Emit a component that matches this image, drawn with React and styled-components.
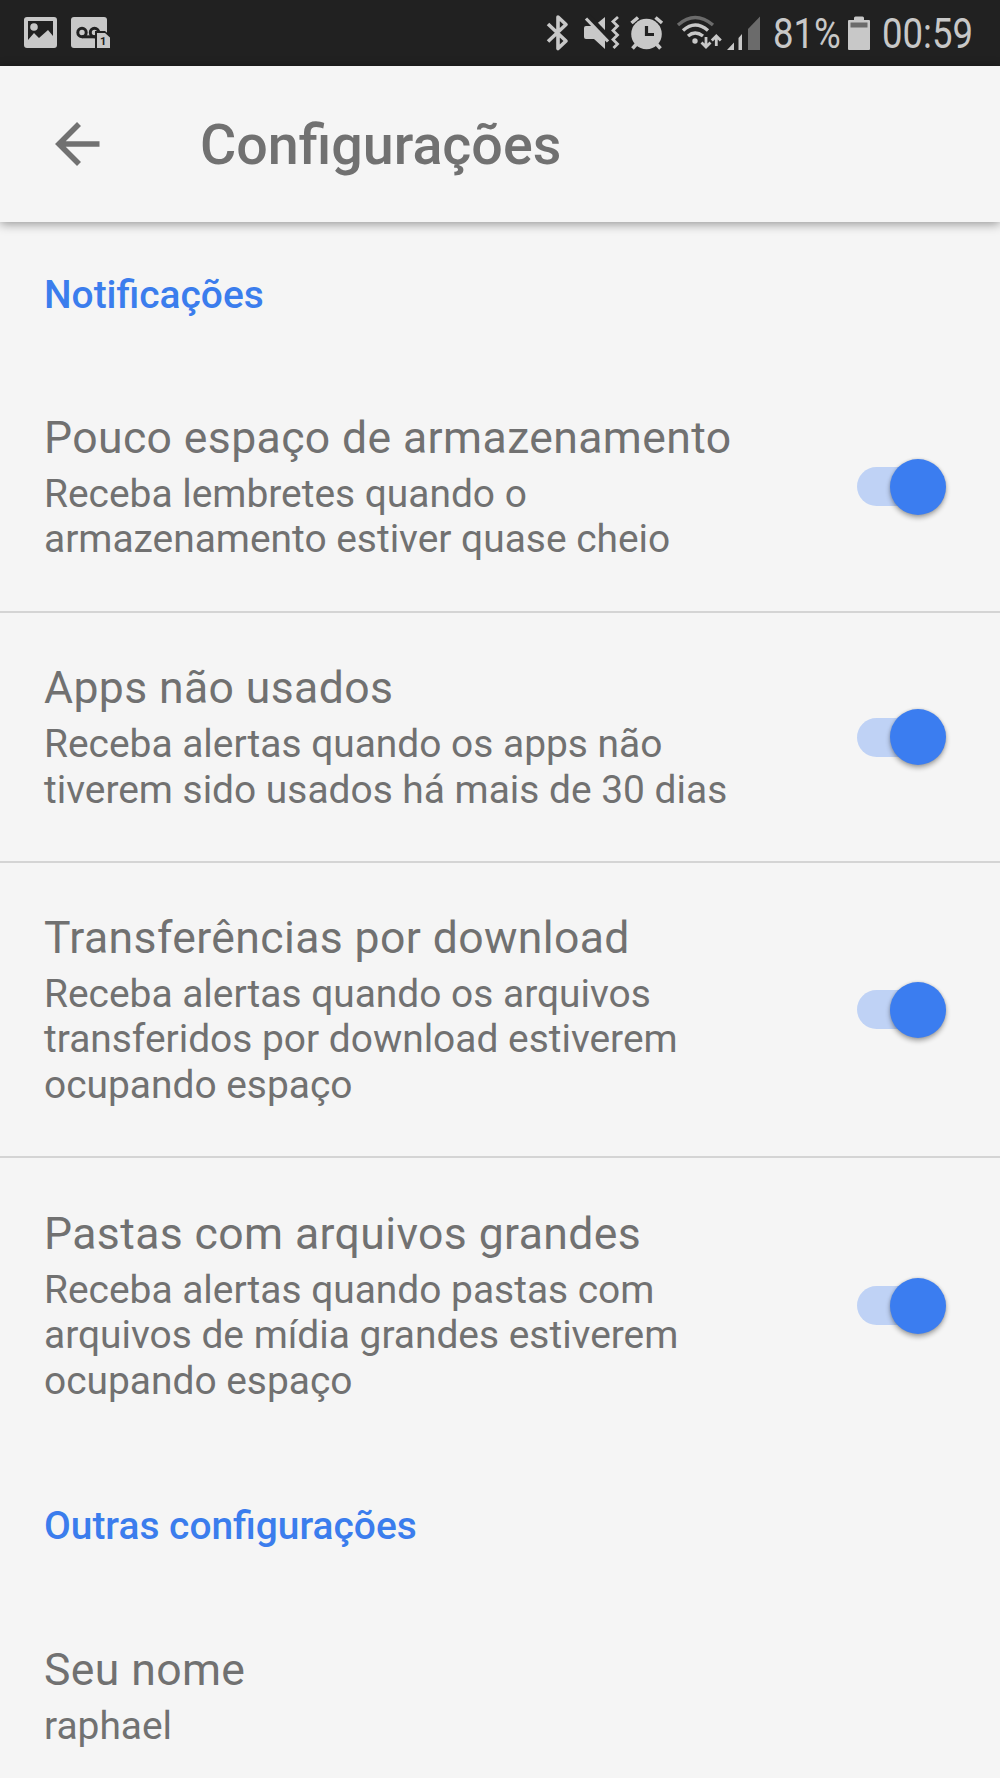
import React, { useState } from 'react'
import styled, { createGlobalStyle } from 'styled-components'

const GlobalStyle = createGlobalStyle`
  body {
    margin: 0;
    background: #f5f5f5;
    font-family: Roboto, sans-serif;
    color: #717171;
  }
`

const Screen = styled.div`
  width: 1000px;
  height: 1778px;
  overflow: hidden;
  background: #f5f5f5;
`

const StatusBar = styled.header`
  display: flex;
  align-items: center;
  justify-content: space-between;
  box-sizing: border-box;
  height: 66px;
  padding: 0 27px 0 23px;
  background: #212121;
  color: #c8c8c8;
`

const StatusGroup = styled.div`
  display: flex;
  align-items: center;
  height: 66px;
`

const StatusIcon = styled.svg`
  display: block;
  flex: none;
  width: ${({ $width }) => $width}px;
  height: 66px;
  margin-left: ${({ $gap }) => $gap || 0}px;
`

const StatusText = styled.span`
  display: block;
  width: ${({ $width }) => $width}px;
  margin-left: ${({ $gap }) => $gap}px;
  font-size: 42px;
  line-height: 66px;
  white-space: nowrap;
  transform: translateY(1px) scaleX(0.87);
  transform-origin: left center;
`

const Toolbar = styled.div`
  position: relative;
  display: flex;
  align-items: center;
  box-sizing: border-box;
  height: 156px;
  padding-left: 55px;
  background: #f5f5f5;
  box-shadow: 0 2px 10px rgba(0, 0, 0, 0.4);
`

const BackButton = styled.button`
  display: flex;
  padding: 0;
  border: 0;
  background: none;
  color: inherit;
`

const Title = styled.h1`
  margin: 2px 0 0 100px;
  font-size: 55.6px;
  font-weight: 500;
  line-height: 66px;
`

const SectionTitle = styled.h2`
  box-sizing: border-box;
  height: ${({ $height }) => $height || 140}px;
  margin: 0;
  padding: 50px 44px 0;
  color: #3b7ded;
  font-size: 38.9px;
  font-weight: 500;
  line-height: 46px;
`

const Item = styled.div`
  display: flex;
  align-items: center;
  justify-content: space-between;
  box-sizing: border-box;
  height: ${({ $height }) => $height}px;
  padding: 0 54px 0 44px;
  border-bottom: ${({ $last }) => ($last ? '0' : '2px solid #d4d4d4')};
`

const ItemTitle = styled.div`
  font-size: 44.5px;
  line-height: 52px;
  letter-spacing: 0.4px;
`

const ItemText = styled.div`
  margin-top: 7px;
  font-size: 38.9px;
  line-height: 45.4px;
  white-space: pre-line;
`

const Switch = styled.button`
  display: flex;
  align-items: center;
  justify-content: ${({ $on }) => ($on ? 'flex-end' : 'flex-start')};
  width: 89px;
  height: 39px;
  padding: 0;
  border: 0;
  background: linear-gradient(#bfd2f5, #bfd2f5) 0 0 / 75px 39px no-repeat;
  border-radius: 20px 0 0 20px;
`

const Thumb = styled.span`
  flex: none;
  width: 56px;
  height: 56px;
  border-radius: 50%;
  background: #3b7df0;
  box-shadow: 0 3px 5px rgba(0, 0, 0, 0.32), 0 0 3px rgba(0, 0, 0, 0.14);
`

const notifications = [
  {
    title: 'Pouco espaço de armazenamento',
    text: 'Receba lembretes quando o\narmazenamento estiver quase cheio',
    height: 251
  },
  {
    title: 'Apps não usados',
    text: 'Receba alertas quando os apps não\ntiverem sido usados há mais de 30 dias',
    height: 250
  },
  {
    title: 'Transferências por download',
    text: 'Receba alertas quando os arquivos\ntransferidos por download estiverem\nocupando espaço',
    height: 295
  },
  {
    title: 'Pastas com arquivos grandes',
    text: 'Receba alertas quando pastas com\narquivos de mídia grandes estiverem\nocupando espaço',
    height: 295
  }
]

const PictureIcon = () => (
  <StatusIcon $width={35} viewBox="23 0 35 66" fill="#c8c8c8">
    <path
      fillRule="evenodd"
      d="M27 17h27q3 0 3 3v25q0 3-3 3H27q-3 0-3-3V20q0-3 3-3zM28 21v19l6-7 5 5 9-8 5 6V21z"
    />
    <circle cx="34" cy="27" r="3.8" />
  </StatusIcon>
)

const VoicemailIcon = () => (
  <StatusIcon $width={40} $gap={12} viewBox="70 0 40 66">
    <rect x="71" y="17" width="36" height="31" rx="3" fill="#c8c8c8" />
    <g fill="none" stroke="#212121" strokeWidth="3">
      <circle cx="82" cy="32.5" r="4.2" />
      <circle cx="94.5" cy="32.5" r="4.2" />
      <path d="M82 36.8h13" />
    </g>
    <path d="M95 49V31h10l6 5v13z" fill="#212121" />
    <path d="M97 48V33h8l5 4.500V48z" fill="#c8c8c8" />
    <text x="100" y="45" fill="#212121" fontSize="11" fontWeight="700">
      1
    </text>
  </StatusIcon>
)

const BluetoothIcon = () => (
  <StatusIcon $width={24} viewBox="546 0 24 66">
    <path
      d="M548 24l18 17-8 7.500V17l8 7.500-18 17"
      fill="none"
      stroke="#c8c8c8"
      strokeWidth="3.600"
      strokeLinejoin="round"
    />
  </StatusIcon>
)

const MutedIcon = () => (
  <StatusIcon $width={38} $gap={13} viewBox="583 0 38 66">
    <path d="M586 26h8l11-9v32l-11-10h-8q-2 0-2-2v-9q0-2 2-2z" fill="#c8c8c8" />
    <path d="M588 16l22 23" stroke="#212121" strokeWidth="5" />
    <path d="M586 18.500l22 23" stroke="#c8c8c8" strokeWidth="3.200" />
    <path
      d="M618 17l-5 4.500 4.500 4.500-4.500 4.500 4.500 4.500-4.500 4.500 4.500 4.500-4 4"
      fill="none"
      stroke="#c8c8c8"
      strokeWidth="2.800"
    />
  </StatusIcon>
)

const AlarmIcon = () => (
  <StatusIcon $width={34} $gap={9} viewBox="630 0 34 66">
    <circle cx="646.5" cy="34" r="15.300" fill="#c8c8c8" />
    <path
      d="M631.500 23l6.500-5.500M655.500 17.500l6.500 5.500M636.500 44l-4 4.500M656.500 44l4 4.500"
      stroke="#c8c8c8"
      strokeWidth="3.600"
    />
    <path d="M646.500 26v8.500h7.500" fill="none" stroke="#212121" strokeWidth="3.200" />
  </StatusIcon>
)

const WifiIcon = () => (
  <StatusIcon $width={46} $gap={12} viewBox="676 0 46 66">
    <g fill="none" stroke="#c8c8c8" strokeWidth="3.400">
      <path d="M678 25Q695 10 713 25" stroke="#6b6b6b" />
      <path d="M683 30.500q12-11 25 0" />
      <path d="M688 36q7-6 15 0" />
      <path d="M706 37v10M701.500 42.500l4.500 4.500 4.500-4.500M716.300 46V36M711.800 40.500l4.500-4.500 4.500 4.500" strokeWidth="2.800" />
    </g>
    <circle cx="695" cy="41" r="2.700" fill="#c8c8c8" />
  </StatusIcon>
)

const SignalIcon = () => (
  <StatusIcon $width={35} $gap={4} viewBox="726 0 35 66">
    <path d="M727 50l7-7.500V50zM738.500 50V38l3.500-4v16z" fill="#c8c8c8" />
    <path d="M748 50V29l12-12.500V50z" fill="#6b6b6b" />
  </StatusIcon>
)

const BatteryIcon = () => (
  <StatusIcon $width={22} $gap={9} viewBox="848 0 22 66">
    <path d="M849 20h5v-2q0-1.500 1.500-1.500h7q1.500 0 1.500 1.500v2h5q1 0 1 1v28q0 1-1 1h-20q-1 0-1-1V21q0-1 1-1z" fill="#c8c8c8" />
    <rect x="850.5" y="22.500" width="17" height="5" fill="#6b6b6b" />
  </StatusIcon>
)

const BackArrow = () => (
  <svg width="45" height="44" viewBox="0 0 45 44" fill="none" stroke="currentColor" strokeWidth="5.600">
    <path d="M44.500 22H4M24 2L4 22l20 20" />
  </svg>
)

const Setting = ({ title, text, height, last }) => {
  const [on, setOn] = useState(true)

  return (
    <Item $height={height} $last={last}>
      <div>
        <ItemTitle>{title}</ItemTitle>
        <ItemText>{text}</ItemText>
      </div>
      <Switch $on={on} role="switch" aria-checked={on} onClick={() => setOn(!on)}>
        <Thumb />
      </Switch>
    </Item>
  )
}

const App = () => (
  <Screen>
    <GlobalStyle />
    <StatusBar>
      <StatusGroup>
        <PictureIcon />
        <VoicemailIcon />
      </StatusGroup>
      <StatusGroup>
        <BluetoothIcon />
        <MutedIcon />
        <AlarmIcon />
        <WifiIcon />
        <SignalIcon />
        <StatusText $width={66} $gap={12}>
          81%
        </StatusText>
        <BatteryIcon />
        <StatusText $width={91} $gap={12}>
          00:59
        </StatusText>
      </StatusGroup>
    </StatusBar>
    <Toolbar>
      <BackButton aria-label="Voltar">
        <BackArrow />
      </BackButton>
      <Title>Configurações</Title>
    </Toolbar>
    <SectionTitle>Notificações</SectionTitle>
    {notifications.map((item, index) => (
      <Setting key={item.title} {...item} last={index === notifications.length - 1} />
    ))}
    <SectionTitle $height={141}>Outras configurações</SectionTitle>
    <Item $height={205} $last>
      <div>
        <ItemTitle>Seu nome</ItemTitle>
        <ItemText>raphael</ItemText>
      </div>
    </Item>
  </Screen>
)

export default App
